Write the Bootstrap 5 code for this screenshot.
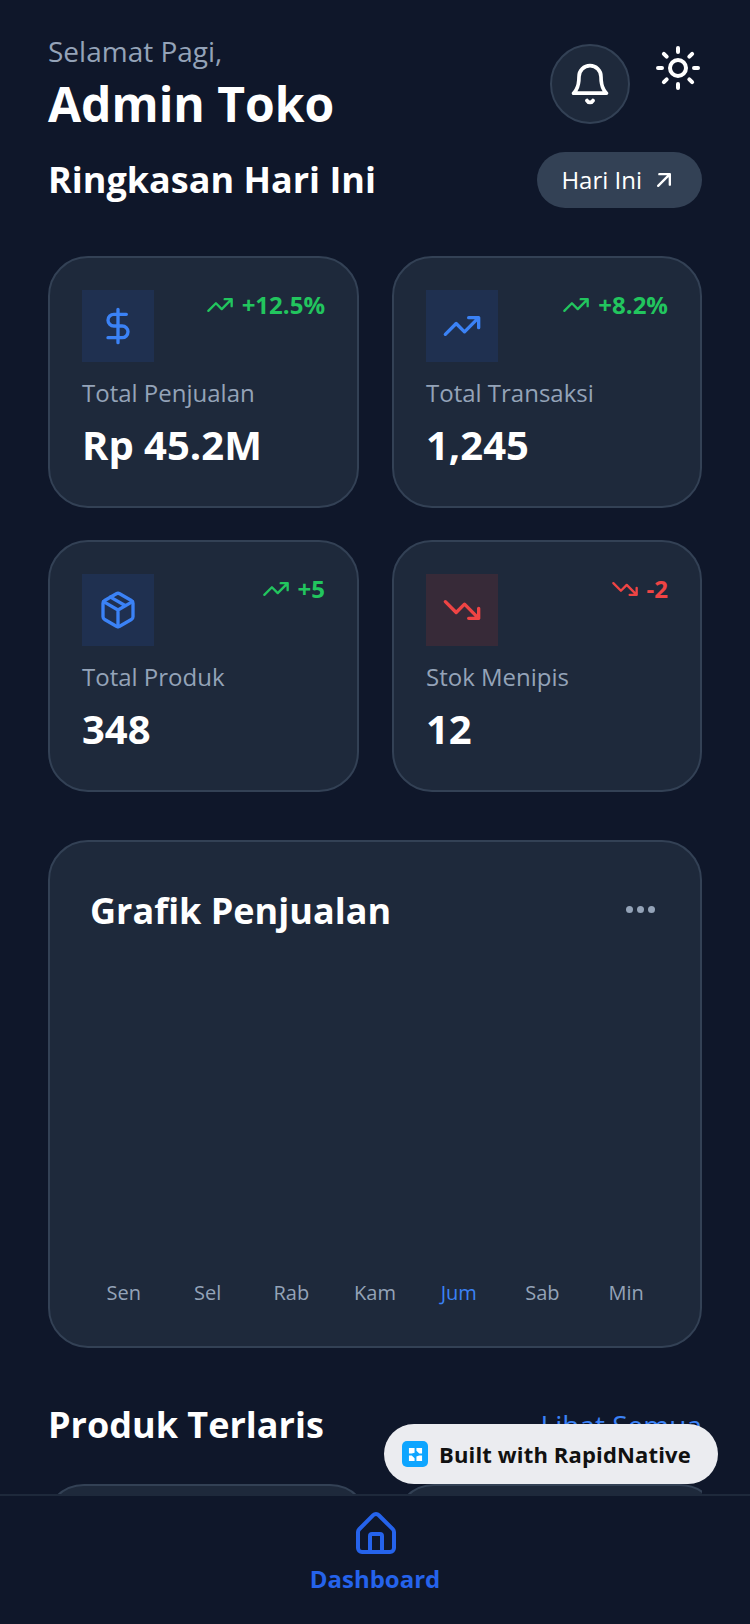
<!DOCTYPE html>
<html>
<head>
  <title>Dashboard</title>
  <link rel="stylesheet" href="https://cdn.jsdelivr.net/npm/bootstrap@5.3.0/dist/css/bootstrap.min.css">
  <style>
    html, body { height: 1624px; overflow: hidden; }
    body { background: #0f172a; font-family: "Open Sans", "Noto Sans", sans-serif; color: #fff; position: relative; }
    svg { display: block; fill: none; stroke: currentColor; stroke-linecap: round; stroke-linejoin: round; }

    .page-wrap { padding: 31px 48px 0; }
    .greet { font-size: 28px; line-height: 40px; color: #94a3b8; }
    .admin-name { font-size: 48px; line-height: 60px; font-weight: 700; margin: 3px 0 0; }
    .bell-btn { width: 80px; height: 80px; background: #1e293b; border: 2px solid #334155; margin-top: 13px; margin-right: 24px; }
    .sun-icon { margin-top: 13px; margin-right: 0; }
    .sec-title { font-size: 36px; line-height: 48px; font-weight: 700; margin: 0; }
    .summary-row { margin-top: 18px; }
    .today-pill { height: 56px; padding: 0 24px; background: #334155; font-size: 24px; gap: 8px; color: #fff; }

    .stat-grid { display: grid; grid-template-columns: 311px 310px; column-gap: 33px; row-gap: 32px; margin-top: 48px; }
    .stat-box { height: 252px; padding: 32px; background: #1e293b; border: 2px solid #334155; border-radius: 40px; }
    .ico-square { width: 72px; height: 72px; background: #1f3050; }
    .ico-square.danger-tint { background: #372a38; }
    .trend { font-size: 24px; font-weight: 700; line-height: 30px; gap: 8px; }
    .trend-up { color: #22c55e; }
    .trend-down { color: #ef4444; }
    .stat-label { font-size: 24px; line-height: 32px; color: #94a3b8; margin-top: 15px; }
    .stat-value { font-size: 40px; line-height: 56px; font-weight: 700; margin-top: 8px; }
    .ico-blue { color: #3b82f6; }
    .ico-red { color: #ef4444; }

    .chart-box { height: 508px; margin-top: 48px; padding: 32px; background: #1e293b; border: 2px solid #334155; border-radius: 40px; }
    .chart-head { padding: 13px 8px 0; }
    .dots-row { gap: 4px; margin-right: 5px; margin-bottom: 4px; }
    .dot-item { width: 7px; height: 7px; border-radius: 50%; background: #94a3b8; }
    .chart-days { display: grid; grid-template-columns: repeat(7, 1fr); text-align: center; font-size: 20px; line-height: 28px; color: #94a3b8; margin-bottom: 7px; }
    .chart-days .on { color: #3b82f6; }

    .best-head { margin-top: 53px; }
    .see-all { font-size: 28px; line-height: 40px; color: #3b82f6; }
    .sold-row { display: flex; gap: 24px; overflow: hidden; margin: 35px 0 0 -4px; }
    .sold-item { flex: 0 0 326px; height: 200px; background: #1e293b; border: 2px solid #334155; border-radius: 40px; }

    .bottom-bar { position: absolute; left: 0; right: 0; top: 1494px; height: 130px; padding-top: 14px; background: #0f172a; border-top: 2px solid #1e293b; color: #2563eb; }
    .home-icon { margin-left: 2px; }
    .bottom-label { font-size: 24px; line-height: 32px; font-weight: 700; margin-top: 5px; }
    .built-badge { position: absolute; left: 384px; top: 1424px; width: 334px; height: 60px; background: #ebecf0; border-radius: 30px; color: #111; font-size: 22px; font-weight: 700; letter-spacing: .15px; padding-left: 18px; gap: 11px; }
    .built-logo { width: 26px; height: 26px; border-radius: 5px; background: #0ea5ff; }
    .built-logo svg { stroke: none; fill: #fff; }
  </style>
</head>
<body>

  <div class="page-wrap">

    <!-- greeting -->
    <div class="d-flex justify-content-between align-items-start">
      <div>
        <div class="greet">Selamat Pagi,</div>
        <h1 class="admin-name">Admin Toko</h1>
      </div>
      <div class="d-flex align-items-start">
        <div class="bell-btn rounded-circle d-flex align-items-center justify-content-center">
          <svg width="44" height="44" viewBox="0 0 24 24" stroke-width="2"><path d="M6 8a6 6 0 0 1 12 0c0 7 3 9 3 9H3s3-2 3-9"/><path d="M10.3 21a1.94 1.94 0 0 0 3.4 0"/></svg>
        </div>
        <svg class="sun-icon" width="48" height="48" viewBox="0 0 24 24" stroke-width="2"><circle cx="12" cy="12" r="4"/><path d="M12 2v2M12 20v2M4.93 4.93l1.41 1.41M17.66 17.66l1.41 1.41M2 12h2M20 12h2M6.34 17.66l-1.41 1.41M19.07 4.93l-1.41 1.41"/></svg>
      </div>
    </div>

    <div class="summary-row d-flex justify-content-between align-items-center">
      <h2 class="sec-title">Ringkasan Hari Ini</h2>
      <div class="today-pill rounded-pill d-flex align-items-center">
        Hari Ini
        <svg width="28" height="28" viewBox="0 0 24 24" stroke-width="2"><path d="M7 17 17 7M8 7h9v9"/></svg>
      </div>
    </div>

    <!-- stat cards -->
    <div class="stat-grid">
      <div class="stat-box">
        <div class="d-flex justify-content-between align-items-start">
          <div class="ico-square ico-blue d-flex align-items-center justify-content-center">
            <svg width="40" height="40" viewBox="0 0 24 24" stroke-width="2"><path d="M12 2v20M17 5H9.5a3.5 3.5 0 0 0 0 7h5a3.5 3.5 0 0 1 0 7H6"/></svg>
          </div>
          <div class="trend trend-up d-flex align-items-center">
            <svg width="28" height="28" viewBox="0 0 24 24" stroke-width="2"><path d="m22 7-8.5 8.5-5-5L2 17M16 7h6v6"/></svg>
            +12.5%
          </div>
        </div>
        <div class="stat-label">Total Penjualan</div>
        <div class="stat-value">Rp 45.2M</div>
      </div>

      <div class="stat-box">
        <div class="d-flex justify-content-between align-items-start">
          <div class="ico-square ico-blue d-flex align-items-center justify-content-center">
            <svg width="40" height="40" viewBox="0 0 24 24" stroke-width="2"><path d="m22 7-8.5 8.5-5-5L2 17M16 7h6v6"/></svg>
          </div>
          <div class="trend trend-up d-flex align-items-center">
            <svg width="28" height="28" viewBox="0 0 24 24" stroke-width="2"><path d="m22 7-8.5 8.5-5-5L2 17M16 7h6v6"/></svg>
            +8.2%
          </div>
        </div>
        <div class="stat-label">Total Transaksi</div>
        <div class="stat-value">1,245</div>
      </div>

      <div class="stat-box">
        <div class="d-flex justify-content-between align-items-start">
          <div class="ico-square ico-blue d-flex align-items-center justify-content-center">
            <svg width="40" height="40" viewBox="0 0 24 24" stroke-width="2"><path d="M21 8a2 2 0 0 0-1-1.73l-7-4a2 2 0 0 0-2 0l-7 4A2 2 0 0 0 3 8v8a2 2 0 0 0 1 1.73l7 4a2 2 0 0 0 2 0l7-4A2 2 0 0 0 21 16Z"/><path d="m3.3 7 8.7 5 8.7-5M12 22V12M7.5 4.27l9 5.15"/></svg>
          </div>
          <div class="trend trend-up d-flex align-items-center">
            <svg width="28" height="28" viewBox="0 0 24 24" stroke-width="2"><path d="m22 7-8.5 8.5-5-5L2 17M16 7h6v6"/></svg>
            +5
          </div>
        </div>
        <div class="stat-label">Total Produk</div>
        <div class="stat-value">348</div>
      </div>

      <div class="stat-box">
        <div class="d-flex justify-content-between align-items-start">
          <div class="ico-square ico-red danger-tint d-flex align-items-center justify-content-center">
            <svg width="40" height="40" viewBox="0 0 24 24" stroke-width="2"><path d="m22 17-8.5-8.5-5 5L2 7M16 17h6v-6"/></svg>
          </div>
          <div class="trend trend-down d-flex align-items-center">
            <svg width="28" height="28" viewBox="0 0 24 24" stroke-width="2"><path d="m22 17-8.5-8.5-5 5L2 7M16 17h6v-6"/></svg>
            -2
          </div>
        </div>
        <div class="stat-label">Stok Menipis</div>
        <div class="stat-value">12</div>
      </div>
    </div>

    <!-- chart -->
    <div class="chart-box d-flex flex-column justify-content-between">
      <div class="chart-head d-flex justify-content-between align-items-center">
        <h2 class="sec-title">Grafik Penjualan</h2>
        <div class="dots-row d-flex"><span class="dot-item"></span><span class="dot-item"></span><span class="dot-item"></span></div>
      </div>
      <div class="chart-days">
        <span>Sen</span><span>Sel</span><span>Rab</span><span>Kam</span><span class="on">Jum</span><span>Sab</span><span>Min</span>
      </div>
    </div>

    <!-- best sellers -->
    <div class="best-head d-flex justify-content-between align-items-center">
      <h2 class="sec-title">Produk Terlaris</h2>
      <span class="see-all">Lihat Semua</span>
    </div>
    <div class="sold-row">
      <div class="sold-item"></div>
      <div class="sold-item"></div>
    </div>
  </div>

  <div class="bottom-bar d-flex flex-column align-items-center">
    <svg class="home-icon" width="48" height="48" viewBox="0 0 24 24" stroke-width="2"><path d="M15 21v-8a1 1 0 0 0-1-1h-4a1 1 0 0 0-1 1v8"/><path d="M3 11a2 2 0 0 1 .6-1.4l7-7a2 2 0 0 1 2.8 0l7 7a2 2 0 0 1 .6 1.4v8a2 2 0 0 1-2 2H5a2 2 0 0 1-2-2z"/></svg>
    <div class="bottom-label">Dashboard</div>
  </div>

  <div class="built-badge d-flex align-items-center">
    <div class="built-logo d-flex align-items-center justify-content-center">
      <svg width="15" height="15" viewBox="0 0 16 16"><path d="M1 1h6v5L4 7H1zM9 1h6v6h-3L9 4zM15 9v6H9v-5l3-1zM7 15H1V9h3l3 3z"/></svg>
    </div>
    Built with RapidNative
  </div>

</body>
</html>
